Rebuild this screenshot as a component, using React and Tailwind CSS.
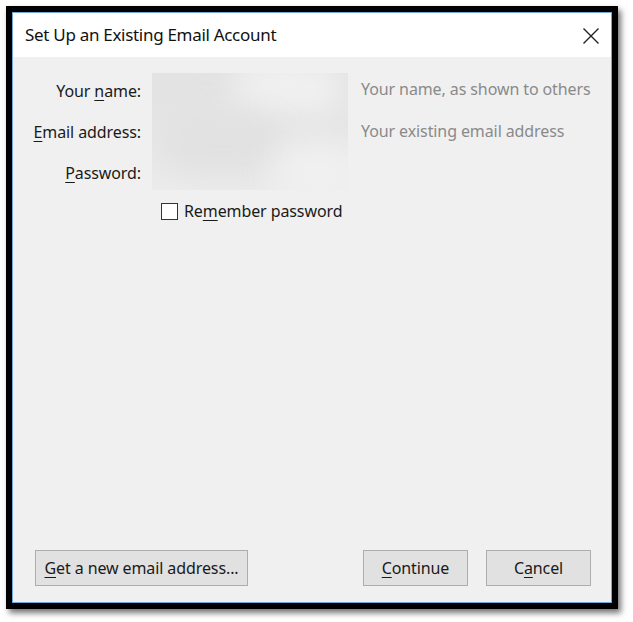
import React from 'react';

const FONT = { fontFamily: '"Noto Sans", "Open Sans", sans-serif' };

function Key({ children }) {
  return <span className="underline underline-offset-[3px] decoration-1">{children}</span>;
}

function DialogButton({ children, className = '' }) {
  return (
    <button
      className={`h-[36px] bg-[#e1e1e1] border border-[#adadad] text-[16px] text-[#1a1a1a] tracking-[-0.1px] ${className}`}
    >
      {children}
    </button>
  );
}

export default function App() {
  return (
    <div className="w-[633px] h-[622px] bg-white pt-[6px] pl-[6px]" style={FONT}>
      <div className="w-[612px] h-[603px] border-[6px] border-black bg-black shadow-[3px_4px_6px_rgba(0,0,0,0.55)]">
        <div className="w-full h-full border border-[#6fa8dc] flex flex-col bg-[#f0f0f0]">
          {/* title bar */}
          <div className="h-[44px] bg-white flex items-center justify-between pl-[12px] pr-[11px]">
            <span className="text-[17px] text-[#111] tracking-[-0.3px]">Set Up an Existing Email Account</span>
            <svg width="18" height="18" viewBox="0 0 18 18" className="mt-[1px]">
              <path d="M1.5 1.5 L16.5 16.5 M16.5 1.5 L1.5 16.5" stroke="#222" strokeWidth="1.4" />
            </svg>
          </div>

          {/* body */}
          <div className="flex-1 flex flex-col pt-[13px] pb-[16px] pl-[22px] pr-[20px]">
            <div className="-ml-[12px] grid grid-cols-[118px_196px_auto] grid-rows-[41px_41px_42px] gap-x-[11px] text-[16px] tracking-[-0.1px] whitespace-nowrap">
              <div className="col-start-2 row-start-1 row-span-3 mt-[3px] mb-[4px] relative overflow-hidden bg-gradient-to-b from-[#e3e3e3] via-[#e6e6e6] to-[#ececec]">
                <div className="absolute left-[80px] top-[-10px] w-[110px] h-[50px] rounded-full bg-[#f1f1f1] blur-lg" />
                <div className="absolute left-[10px] top-[40px] w-[120px] h-[60px] rounded-full bg-[#e1e1e1] blur-lg" />
                <div className="absolute left-[120px] top-[70px] w-[90px] h-[60px] rounded-full bg-[#f0f0f0] blur-lg" />
              </div>

              <div className="col-start-1 row-start-1 flex items-center justify-end text-[#1a1a1a]">
                Your&nbsp;<Key>n</Key>ame:
              </div>
              <div className="col-start-3 row-start-1 flex items-center pl-[2px] pb-[3px] text-[#8a8a8a]">
                Your name, as shown to others
              </div>

              <div className="col-start-1 row-start-2 flex items-center justify-end text-[#1a1a1a]">
                <span>
                  <Key>E</Key>mail address:
                </span>
              </div>
              <div className="col-start-3 row-start-2 flex items-center pl-[2px] pb-[1px] text-[#8a8a8a]">
                Your existing email address
              </div>

              <div className="col-start-1 row-start-3 flex items-center justify-end text-[#1a1a1a]">
                <Key>P</Key>assword:
              </div>
            </div>

            <div className="flex items-center gap-[6px] ml-[126px] mt-[5px] text-[16px] text-[#1a1a1a] tracking-[-0.1px]">
              <span className="w-[17px] h-[17px] bg-white border border-[#333]" />
              <span>
                Re<Key>m</Key>ember password
              </span>
            </div>

            <div className="mt-auto flex items-center">
              <DialogButton className="w-[213px]">
                <Key>G</Key>et a new email address...
              </DialogButton>
              <div className="flex-1" />
              <DialogButton className="w-[105px]">
                <Key>C</Key>ontinue
              </DialogButton>
              <DialogButton className="w-[105px] ml-[18px]">
                C<Key>a</Key>ncel
              </DialogButton>
            </div>
          </div>
        </div>
      </div>
    </div>
  );
}
